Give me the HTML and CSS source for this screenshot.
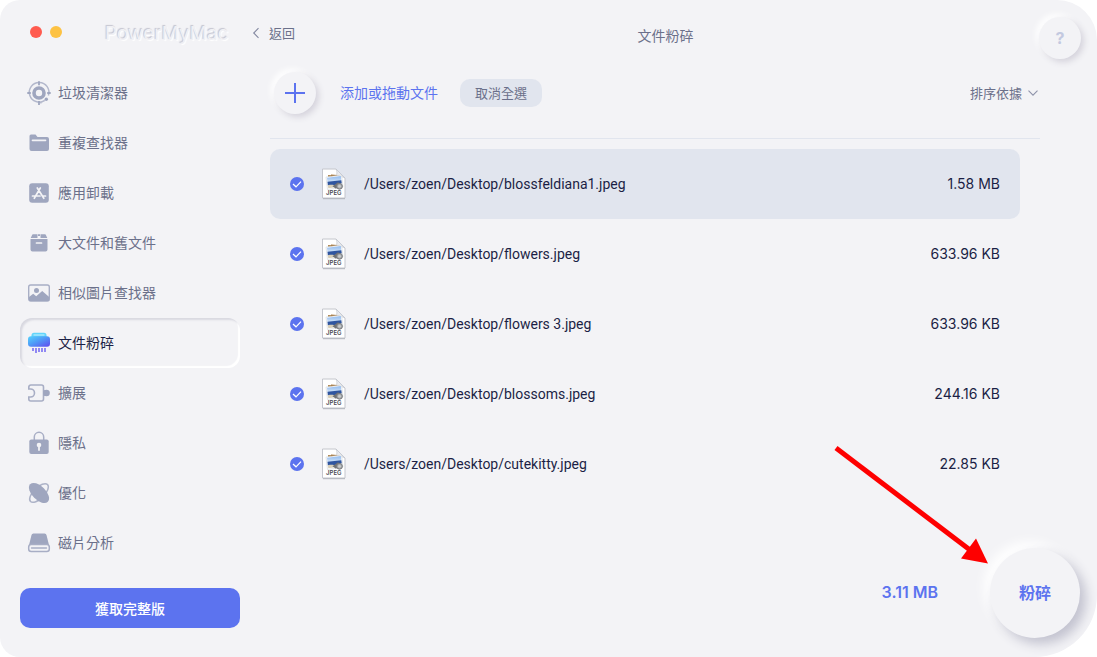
FILE: index.html
```html
<!DOCTYPE html>
<html lang="zh-Hant">
<head>
<meta charset="utf-8">
<meta name="viewport" content="width=device-width, initial-scale=1">
<title>PowerMyMac</title>
<link rel="stylesheet" href="styles.css">
</head>
<body>
<svg class="defs" width="0" height="0" aria-hidden="true">
  <defs>
    <linearGradient id="sky" x1="0" y1="0" x2="0" y2="1"><stop offset="0" stop-color="#8fb9ee"/><stop offset="1" stop-color="#dcebfa"/></linearGradient>
    <symbol id="jpeg" viewBox="0 0 26 32">
      <path d="M1.500 1h13.500l9 9v20h-22.500z" fill="#fff" stroke="#c4c6cd"/>
      <path d="M2 30.700h22" stroke="#a5a8b0" stroke-width=".8"/>
      <path d="M15 1c1.500 2.500 1 5.500 0 7.500 2.500-.5 6.500 0 9 1.500z" fill="#e9ebef" stroke="#c3c6cd" stroke-width=".7"/>
      <path d="M7 7l13 .5v3l-13 1z" fill="#b08a55"/>
      <path d="M10 6.500l6 .5v2h-6z" fill="#a5773d"/>
      <path d="M5 9l15.500-2 1.500 12-15.500 2.500z" fill="#fff" stroke="#c9ccd3" stroke-width=".5"/>
      <path d="M6 9.800l13.800-1.800.6 5-13.800 2z" fill="url(#sky)"/>
      <path d="M6.500 13.700l13.800-1.500.5 3-6 1.800-7.900.5z" fill="#2f559f"/>
      <path d="M6.900 17.200c4-.8 6-.2 7.500.3l-.5 1.800-6.600 1z" fill="#d7cfb8"/>
      <path d="M11.500 18.200l5.500-4 3 2-5 4.500z" fill="#6f7174"/>
      <circle cx="18.500" cy="18.300" r="2.900" fill="#a9abad" stroke="#77797c"/>
      <circle cx="18.500" cy="18.300" r="1.400" fill="#c9cccd"/>
      <text x="12.800" y="27.300" class="jpeg-text">JPEG</text>
    </symbol>
  </defs>
</svg>

<div class="window">
  <aside class="sidebar">
    <div class="titlebar">
      <div class="lights">
        <button class="light close" aria-label="關閉"></button>
        <button class="light minimize" aria-label="最小化"></button>
      </div>
      <div class="brand">PowerMyMac</div>
    </div>

    <nav class="menu">
      <a class="item" href="#">
        <svg class="icon" viewBox="0 0 22 22"><g fill="none" stroke="#9fa6bf"><circle cx="11" cy="11" r="5" stroke-width="3.600"/><path d="M16.800 18.300A9.800 9.800 0 1 1 20.400 13.500M11.800 20.800l2-.4" stroke-width="1.500" stroke="#b3b8cc"/><path d="M11-.7v4M-.7 11h3.500M19.200 11h3.500M11 19v4" stroke-width="1.800"/></g><circle cx="18.300" cy="17.300" r="1.700" fill="#9fa6bf"/></svg>
        垃圾清潔器</a>
      <a class="item" href="#">
        <svg class="icon" viewBox="0 0 22 22"><path d="M1.500 5V4a1.500 1.500 0 0 1 1.500-1.500h4.500L9.500 5H19a2 2 0 0 1 2 2v10a2 2 0 0 1-2 2H3.500a2 2 0 0 1-2-2z" fill="#9fa6bf"/><path d="M4.500 8.300h13" stroke="#f3f3f6" stroke-width="1.700" stroke-linecap="round"/></svg>
        重複查找器</a>
      <a class="item" href="#">
        <svg class="icon" viewBox="0 0 22 22"><rect x="1.200" y="1.200" width="19.600" height="19.600" rx="3" fill="#9fa6bf"/><path d="M9.300 6l6.500 10.300M12.300 6L6.300 16.300M4.500 14h7.500M14.700 14h2.800" fill="none" stroke="#f3f3f6" stroke-width="1.700" stroke-linecap="round"/></svg>
        應用卸載</a>
      <a class="item" href="#">
        <svg class="icon" viewBox="0 0 22 22"><path d="M5 2.300h4.500v3.700H2.700L4 3.200q.3-.9 1-.9zM12.500 2.300H17q.7 0 1 .9L19.300 6h-6.800zM10 2.300h2V4h-2zM2.500 7h17V17.500a2 2 0 0 1-2 2h-13a2 2 0 0 1-2-2z" fill="#9fa6bf"/><path d="M8.500 11h5" stroke="#f3f3f6" stroke-width="1.700" stroke-linecap="round"/></svg>
        大文件和舊文件</a>
      <a class="item" href="#">
        <svg class="icon" viewBox="0 0 22 22"><rect x=".7" y="3" width="20.600" height="16" rx="2" fill="none" stroke="#a8aec5" stroke-width="1.400"/><circle cx="8.500" cy="8.600" r="2.500" fill="#9fa6bf"/><path d="M1 15l4.200-3.300 3 2.500 6-5.200 7 6v3a1 1 0 0 1-1 1H2a1 1 0 0 1-1-1z" fill="#9fa6bf"/></svg>
        相似圖片查找器</a>
      <a class="item active" href="#" aria-current="page">
        <svg class="icon" viewBox="0 0 22 22"><defs><linearGradient id="shred" x1="0" y1="0" x2="1" y2="1"><stop offset="0" stop-color="#53d2fc"/><stop offset=".45" stop-color="#4f9cf7"/><stop offset="1" stop-color="#6048ee"/></linearGradient></defs><rect x="3.500" y=".8" width="15" height="7" rx="2.500" fill="#62d5fb"/><path d="M5.500 3h11" stroke="#b9ecfd" stroke-width="1.200"/><rect x="0" y="4.300" width="22" height="10.400" rx="3" fill="url(#shred)"/><path d="M5 16v3M8 16v5M11 16v4M14 16v4M17 16v4" stroke="#8c83f3" stroke-width="1.900"/></svg>
        文件粉碎</a>
      <a class="item" href="#">
        <svg class="icon" viewBox="0 0 22 22"><path d="M.8 7V5a2 2 0 0 1 2-2h10.700a2 2 0 0 1 2 2v12a2 2 0 0 1-2 2H2.800a2 2 0 0 1-2-2v-2h1.700a4 4 0 0 0 0-8z" fill="none" stroke="#a8aec5" stroke-width="1.600"/><path d="M15.500 8.500l1-.3a3 3 0 1 1 0 5.600l-1-.3z" fill="#9fa6bf"/><circle cx="18.500" cy="11" r="3.300" fill="#9fa6bf"/></svg>
        擴展</a>
      <a class="item" href="#">
        <svg class="icon" viewBox="0 0 22 22"><path d="M6.300 8V5a4.700 4.700 0 0 1 9.400 0v3" fill="none" stroke="#a8aec5" stroke-width="1.500"/><rect x="1.300" y="7.500" width="19.400" height="14.500" rx="2" fill="#9fa6bf"/><circle cx="11" cy="13" r="2.300" fill="#f3f3f6"/><path d="M11 14v4" stroke="#f3f3f6" stroke-width="1.800" stroke-linecap="round"/></svg>
        隱私</a>
      <a class="item" href="#">
        <svg class="icon" viewBox="0 0 22 22"><ellipse cx="11" cy="11" rx="12" ry="5.500" transform="rotate(-45 11 11)" fill="none" stroke="#adb3c8" stroke-width="1.500"/><ellipse cx="11" cy="11" rx="12.500" ry="6.800" transform="rotate(45 11 11)" fill="#9fa6bf"/></svg>
        優化</a>
      <a class="item" href="#">
        <svg class="icon" viewBox="0 0 22 22"><path d="M5.500 1.500h11a2 2 0 0 1 2 1.500L21 13H1L3.500 3a2 2 0 0 1 2-1.500z" fill="#9fa6bf"/><path d="M3 12.500h16a2.500 2.500 0 0 1 2.300 2.500v2a2.500 2.500 0 0 1-2.500 2.500H3.200A2.500 2.500 0 0 1 .7 17v-2A2.500 2.500 0 0 1 3 12.500z" fill="#f3f3f6" stroke="#a8aec5" stroke-width="1.500"/><path d="M3.500 16h15" stroke="#a8aec5" stroke-width="1.400" stroke-linecap="round"/></svg>
        磁片分析</a>
    </nav>

    <button class="upgrade">獲取完整版</button>
  </aside>

  <main class="main">
    <header class="header">
      <button class="back">
        <svg width="8" height="12" viewBox="0 0 8 12"><path d="M6.500 1.200L1.700 6l4.800 4.800" fill="none" stroke="#8287a0" stroke-width="1.100"/></svg>
        返回</button>
      <h1 class="title">文件粉碎</h1>
      <button class="round help" aria-label="說明">?</button>
    </header>

    <div class="toolbar">
      <button class="round add" id="add" aria-label="添加">
        <svg width="20" height="20" viewBox="0 0 20 20"><path d="M10 0v20M0 10h20" stroke="#5c73ef" stroke-width="2"/></svg>
      </button>
      <label class="add-label" for="add">添加或拖動文件</label>
      <button class="deselect">取消全選</button>
      <div class="sort">
        <select class="sort-select" aria-label="排序依據"><option>排序依據</option></select>
        <svg class="chevron" width="10" height="6" viewBox="0 0 10 6"><path d="M.5.700L5 5.200 9.500.700" fill="none" stroke="#8e93aa" stroke-width="1.100"/></svg>
      </div>
    </div>

    <ul class="files">
      <li><label class="file selected"><input class="check" type="checkbox" checked><svg class="thumb" aria-hidden="true"><use href="#jpeg"/></svg><span class="path">/Users/zoen/Desktop/blossfeldiana1.jpeg</span><span class="size">1.58 MB</span></label></li>
      <li><label class="file"><input class="check" type="checkbox" checked><svg class="thumb" aria-hidden="true"><use href="#jpeg"/></svg><span class="path">/Users/zoen/Desktop/flowers.jpeg</span><span class="size">633.96 KB</span></label></li>
      <li><label class="file"><input class="check" type="checkbox" checked><svg class="thumb" aria-hidden="true"><use href="#jpeg"/></svg><span class="path">/Users/zoen/Desktop/flowers 3.jpeg</span><span class="size">633.96 KB</span></label></li>
      <li><label class="file"><input class="check" type="checkbox" checked><svg class="thumb" aria-hidden="true"><use href="#jpeg"/></svg><span class="path">/Users/zoen/Desktop/blossoms.jpeg</span><span class="size">244.16 KB</span></label></li>
      <li><label class="file"><input class="check" type="checkbox" checked><svg class="thumb" aria-hidden="true"><use href="#jpeg"/></svg><span class="path">/Users/zoen/Desktop/cutekitty.jpeg</span><span class="size">22.85 KB</span></label></li>
    </ul>

    <footer class="footer">
      <span class="total">3.11 MB</span>
      <div class="shred-wrap">
        <button class="shred">粉碎</button>
        <svg class="arrow" width="156" height="120" viewBox="0 0 156 120" aria-hidden="true"><path d="M3 3l134 102" stroke="#fe0000" stroke-width="5"/><path d="M155 118.500l-27-5 15-20z" fill="#fe0000"/></svg>
      </div>
    </footer>
  </main>
</div>
</body>
</html>
```
FILE: styles.css
```css
* { box-sizing: border-box; }

body {
  margin: 0;
  background: #fff;
  color: #6b708a;
  font: 14px/20px Inter, "Noto Sans CJK TC", sans-serif;
}

button, select {
  margin: 0;
  padding: 0;
  border: 0;
  background: none;
  color: inherit;
  font: inherit;
}

.defs { position: absolute; }

.window {
  display: grid;
  grid-template-columns: 240px 1fr;
  min-height: 100vh;
  overflow: hidden;
  border-radius: 20px 40px 62px 20px;
  background: #f3f3f6;
}

/* Sidebar */
.sidebar {
  display: flex;
  flex-direction: column;
  padding-left: 20px;
}

.titlebar {
  display: flex;
  align-items: center;
  gap: 43px;
  height: 64px;
  padding-left: 10px;
}

.lights { display: flex; gap: 8px; }
.light { width: 12px; height: 12px; border-radius: 50%; }
.close { background: #ff5b4f; }
.minimize { background: #fdc243; }

.brand {
  padding-top: 3px;
  color: #f0f0f4;
  font-size: 19px;
  text-shadow: -1px -1px 1px #c4c4cf, 1px 1px 1px #fff;
}

.menu { padding-top: 4px; }

.item {
  display: flex;
  align-items: center;
  gap: 8px;
  height: 50px;
  padding: 0 8px;
  border-radius: 12px;
  color: #6b708a;
  text-decoration: none;
}

.item.active {
  color: #1b1f45;
  box-shadow: inset 2px 2px 2px #d8d8e0, inset -2px -2px 1px #fff;
}

.icon { width: 22px; height: 22px; overflow: visible; }

.upgrade {
  height: 40px;
  margin-top: 20px;
  padding-top: 1px;
  border-radius: 10px;
  background: #5c73ef;
  color: #fff;
  font-weight: 500;
}

/* Main pane */
.main {
  display: flex;
  flex-direction: column;
  padding: 17px 16px 19px 10px;
}

.header {
  display: grid;
  grid-template-columns: 1fr auto 1fr;
  align-items: center;
}

.back {
  display: flex;
  align-items: center;
  gap: 9px;
  padding: 0 0 10px 2px;
  justify-self: start;
  color: #6b708a;
  font-size: 13px;
}

.title {
  margin: 0;
  padding-bottom: 4px;
  color: #6b708a;
  font-size: 14px;
  font-weight: 400;
}

.round {
  display: grid;
  place-items: center;
  width: 42px;
  height: 42px;
  border-radius: 50%;
  background: #f3f3f6;
  box-shadow: 3px 3px 6px #d5d3dc, -3px -3px 6px #fff;
}

.help {
  justify-self: end;
  color: #c3c9e0;
  font-size: 16px;
  font-weight: 700;
}

.toolbar {
  display: flex;
  align-items: center;
  height: 80px;
  margin: 0 41px 0 20px;
  padding: 0 2px 11px 4px;
  border-bottom: 1px solid #e1e5ee;
}

.add-label { margin-left: 24px; color: #5c73ef; }

.deselect {
  height: 28px;
  margin-left: 22px;
  padding: 0 15px;
  border-radius: 10px;
  background: #e1e5ee;
  font-size: 13px;
}

.sort {
  display: flex;
  align-items: center;
  gap: 5px;
  margin-left: auto;
}

.sort-select { appearance: none; font-size: 13px; }

.files {
  margin: 0 61px 0 20px;
  padding: 10px 0 0;
  list-style: none;
}

.file {
  display: flex;
  align-items: center;
  height: 70px;
  padding: 0 20px;
  border-radius: 10px;
  color: #1b1f45;
}

.file.selected { background: #e1e5ee; }

.check {
  appearance: none;
  width: 14px;
  height: 14px;
  margin: 0;
  border-radius: 50%;
  background: #5c73ef;
}

.check:checked {
  background-image: url("data:image/svg+xml,%3Csvg xmlns='http://www.w3.org/2000/svg' viewBox='0 0 14 14'%3E%3Cpath d='M3 7l3 2.800L11 4.600' fill='none' stroke='white' stroke-width='1.200'/%3E%3C/svg%3E");
}

.thumb { width: 26px; height: 32px; margin: 0 17px; }

.jpeg-text {
  fill: #4a4c52;
  font: 600 6px Inter, sans-serif;
  text-anchor: middle;
}

.path { font-family: Roboto, Inter, sans-serif; }

.size { margin-left: auto; }

.footer {
  display: flex;
  align-items: center;
  justify-content: flex-end;
  gap: 52px;
  margin-top: auto;
  padding-right: 1px;
}

.total {
  padding-bottom: 2px;
  color: #5c73ef;
  font-size: 16px;
  font-weight: 600;
}

.shred-wrap { position: relative; }

.shred {
  display: block;
  width: 90px;
  height: 90px;
  border-radius: 50%;
  background: #f3f3f6;
  box-shadow: 6px 6px 12px #c2c2cf, -6px -6px 12px #fff;
  color: #5c73ef;
  font-size: 16px;
  font-weight: 600;
}

.arrow {
  position: absolute;
  right: 91px;
  bottom: 73px;
  pointer-events: none;
}
```
